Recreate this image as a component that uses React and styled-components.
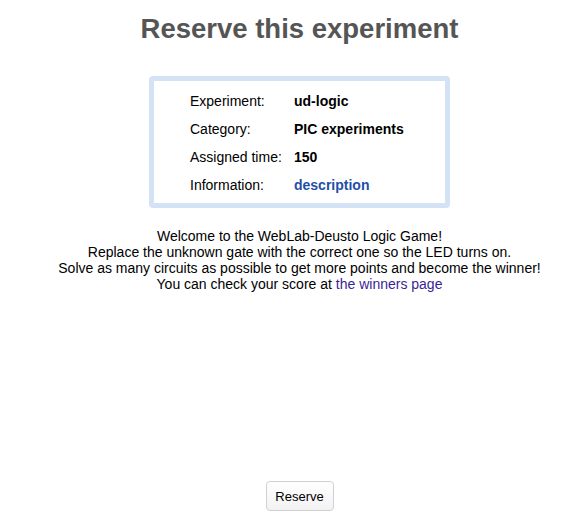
import React from "react";
import styled, { createGlobalStyle } from "styled-components";

const Global = createGlobalStyle`
  html, body { margin: 0; padding: 0; background: #fff; }
  body { font-family: "Liberation Sans", Arial, sans-serif; color: #000; }
`;

const Page = styled.div`
  width: 562px;
  height: 524px;
  box-sizing: border-box;
  padding-left: 37px;
  display: flex;
  flex-direction: column;
  align-items: center;
`;

const Title = styled.h1`
  margin: 14px 0 0;
  font-size: 27.5px;
  line-height: 30px;
  font-weight: bold;
  color: #555;
`;

const InfoBox = styled.div`
  margin-top: 32px;
  width: 301px;
  box-sizing: border-box;
  border: 5px solid #d3e3f5;
  border-radius: 4px;
  padding: 6px 0 4px 36px;
`;

const Grid = styled.div`
  display: grid;
  grid-template-columns: 104px auto;
  grid-auto-rows: 28px;
  align-items: center;
  font-size: 14px;
`;

const Label = styled.span`
  color: #000;
`;

const Value = styled.span`
  font-weight: bold;
  color: ${(p) => (p.$link ? "#1f4fa8" : "#000")};
`;

const Welcome = styled.p`
  margin: 20px 0 0;
  text-align: center;
  font-size: 14px;
  line-height: 16px;
`;

const WinnersLink = styled.a`
  color: #3b1f96;
  text-decoration: none;
`;

const Spacer = styled.div`
  flex: 1;
`;

const ReserveButton = styled.button`
  margin-bottom: 13px;
  width: 68px;
  height: 30px;
  font-family: "Liberation Sans", Arial, sans-serif;
  font-size: 13px;
  color: #000;
  border: 1px solid #d0d0d0;
  border-radius: 4px;
  background: linear-gradient(#ffffff, #f2f2f2);
  padding: 0;
`;

const rows = [
  ["Experiment:", "ud-logic"],
  ["Category:", "PIC experiments"],
  ["Assigned time:", "150"],
  ["Information:", "description", true],
];

export default function App() {
  return (
    <>
      <Global />
      <Page>
        <Title>Reserve this experiment</Title>
        <InfoBox>
          <Grid>
            {rows.map(([l, v, link]) => (
              <React.Fragment key={l}>
                <Label>{l}</Label>
                <Value $link={link}>{v}</Value>
              </React.Fragment>
            ))}
          </Grid>
        </InfoBox>
        <Welcome>
          Welcome to the WebLab-Deusto Logic Game!
          <br />
          Replace the unknown gate with the correct one so the LED turns on.
          <br />
          Solve as many circuits as possible to get more points and become the winner!
          <br />
          You can check your score at <WinnersLink href="#">the winners page</WinnersLink>
        </Welcome>
        <Spacer />
        <ReserveButton>Reserve</ReserveButton>
      </Page>
    </>
  );
}
